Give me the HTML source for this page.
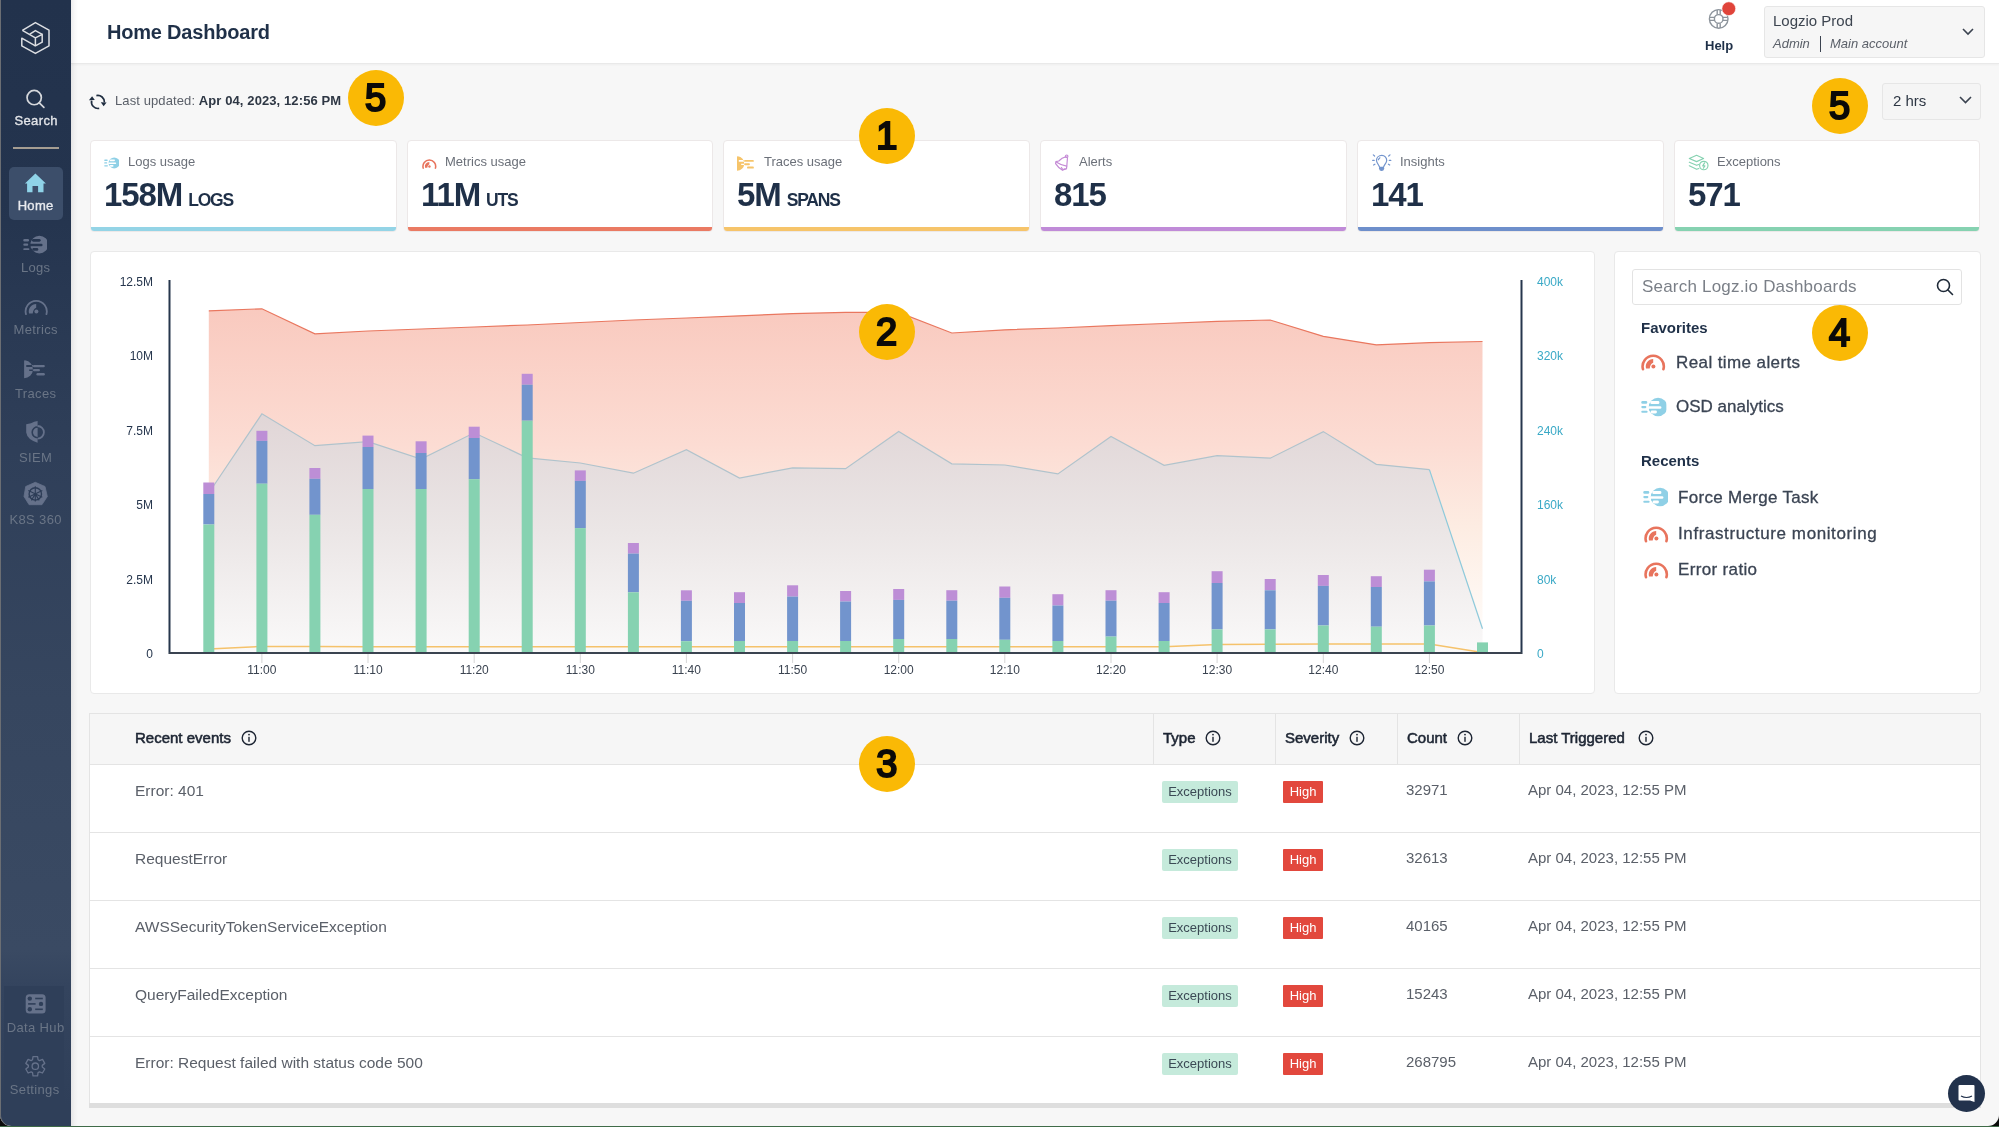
<!DOCTYPE html>
<html><head><meta charset="utf-8">
<style>
*{margin:0;padding:0;box-sizing:border-box}
html,body{width:1999px;height:1127px;overflow:hidden;background:#0b0b0b;font-family:"Liberation Sans",sans-serif}
#win{will-change:transform;position:absolute;left:0;top:0;width:1999px;height:1126px;background:#f7f7f7;border-radius:0 0 11px 11px;overflow:hidden}
#gl{position:absolute;left:0;top:1126px;width:1999px;height:1px;background:#3f6b48}
.abs{position:absolute}
.nw{white-space:nowrap}
#side{position:absolute;left:0;top:0;width:71px;height:1126px;background:linear-gradient(#22324c 0px,#24344e 200px,#2f3f59 450px,#36465f 700px,#3a4a63 950px,#34445e 986px,#2f3f59 1106px,#2f3f59 1126px);border-bottom-left-radius:11px;box-shadow:inset 1px 0 0 #6b6e73}
.si{position:absolute;left:0;width:71px;text-align:center;font-size:13px;color:#6a7586;white-space:nowrap;letter-spacing:0.35px;text-indent:0.35px}
#hdr{position:absolute;left:71px;top:0;width:1928px;height:64px;background:#fff;border-bottom:1px solid #e9e9e9;box-shadow:0 1px 2px rgba(0,0,0,0.04)}
.card{position:absolute;top:140px;height:92px;background:#fff;border:1px solid #ece8e8;border-radius:4px;overflow:hidden}
.card .bar{position:absolute;left:0;right:0;bottom:0;height:4px}
.card .t{position:absolute;left:37px;top:13px;font-size:13px;color:#6b7079;white-space:nowrap}
.card .n{position:absolute;left:13px;top:37px;font-size:33px;font-weight:bold;color:#1f3048;white-space:nowrap;letter-spacing:-1.1px;line-height:1}
.card .n span{font-size:17.5px;margin-left:6px;letter-spacing:-1.2px}
.card svg{position:absolute;left:13px;top:15px}
.yc{position:absolute;width:56px;height:56px;border-radius:50%;background:#fab905;color:#0c0a08;font-weight:normal;font-size:38px;-webkit-text-stroke:2.2px #0c0a08;text-align:center;line-height:57px}
.panel{position:absolute;background:#fff;border:1px solid #e9e9e9;border-radius:4px}
.fav{position:absolute;font-size:17px;color:#3b4453;-webkit-text-stroke:0.3px #3b4453;white-space:nowrap}
.fh{position:absolute;font-size:15px;font-weight:bold;color:#1f3048;white-space:nowrap}
.th{position:absolute;top:729px;font-size:15px;font-weight:normal;-webkit-text-stroke:0.55px #1d2533;color:#1d2533;white-space:nowrap}
.ev{position:absolute;left:135px;font-size:15.5px;color:#5b6069;white-space:nowrap}
.tc{position:absolute;font-size:15px;color:#5b6069;white-space:nowrap}
.bx{position:absolute;left:1162px;width:76px;height:22px;background:#c5eadb;color:#3b4a55;font-size:13px;text-align:center;line-height:22px;border-radius:2px}
.hi{position:absolute;left:1283px;width:40px;height:22px;background:#e2483d;color:#fff;font-size:13px;text-align:center;line-height:22px;border-radius:1px}
.rl{position:absolute;left:90px;width:1890px;height:1px;background:#e4e4e4}
</style></head><body>
<div id="win">
<svg width="0" height="0" style="position:absolute">
<defs>
  <mask id="lmask" maskUnits="userSpaceOnUse" x="0" y="0" width="27" height="21">
    <rect x="0" y="0" width="27" height="21" fill="#fff"/>
    <rect x="9.8" y="4.3" width="9.6" height="3" rx="1.4" fill="#000"/>
    <rect x="7.5" y="9.7" width="14" height="2.7" rx="1.3" fill="#000"/>
    <rect x="10.2" y="14.3" width="6.6" height="3" rx="1.4" fill="#000"/>
  </mask>
  <symbol id="ilogs" viewBox="0 0 27 21">
    <g mask="url(#lmask)">
      <circle cx="18" cy="10.5" r="9.8"/>
      <rect x="8.4" y="7.3" width="10" height="2.4" rx="1"/>
      <rect x="8.4" y="12.4" width="10" height="1.9" rx="0.9"/>
    </g>
    <rect x="0.3" y="4.3" width="6.3" height="2.8" rx="1.3"/>
    <rect x="0.3" y="9.4" width="5.4" height="2.3" rx="1.1"/>
    <rect x="0.3" y="14.5" width="6.7" height="2.1" rx="1"/>
  </symbol>
  <symbol id="igauge" viewBox="0 0 25 17">
    <path d="M1.98 15.2 A10.6 10.6 0 1 1 22.42 15.2" fill="none" stroke="currentColor" stroke-linecap="round"/>
    <path d="M5.05 14.5 A7.4 7.4 0 0 1 12.2 5.0 L12.2 8.7 Q9.2 9.8 8.7 14.6 Z"/>
    <circle cx="12.4" cy="12.6" r="2"/>
  </symbol>
  <symbol id="itraces" viewBox="0 0 19 16">
    <path d="M0 0.6 Q0 0 0.8 0.05 A7.75 7.75 0 0 1 0 15.5 Z M1.9 4 L7.8 4 L7.8 5.9 L1.9 5.9 Z M4.4 7.9 L7.8 7.9 L7.8 9.2 L4.4 9.2 Z" fill-rule="evenodd"/>
    <rect x="7.6" y="4" width="10.2" height="2" rx="1"/>
    <rect x="7.6" y="7.6" width="6" height="1.9" rx="0.9"/>
    <rect x="10.6" y="11" width="7.2" height="2.1" rx="1"/>
  </symbol>
</defs>
</svg>
<div id="side">
  <!-- logo -->
  <svg class="abs" style="left:15px;top:15px" width="42" height="45" viewBox="0 0 42 45" fill="none" stroke="#dcdee2" stroke-width="1.5" stroke-linejoin="round">
    <path d="M7.4 15.4 L20.4 7.6 L34 15.2 L34 30.8 L20.4 38.4 L6.8 30.8 L6.8 23.2 L20.4 30.8"/>
    <path d="M7.4 15.4 L20.4 22.8 L27.2 19.4 L27.2 27.2 L20.4 30.8 L20.4 22.8"/>
    <path d="M14.8 19.2 L20.4 15.6 L27.2 19.4"/>
  </svg>
  <!-- search -->
  <svg class="abs" style="left:25px;top:89px" width="22" height="22" viewBox="0 0 22 22" fill="none" stroke="#d6d8dc" stroke-width="1.7">
    <circle cx="9.2" cy="8.6" r="7.15"/><path d="M14.3 13.8 L18.9 18.3" stroke-linecap="round"/>
  </svg>
  <div class="si" style="top:113px;color:#e2e4e8;font-weight:normal;-webkit-text-stroke:0.35px #e2e4e8;font-size:13px;left:0.5px">Search</div>
  <div class="abs" style="left:13px;top:147px;width:46px;height:2px;background:#a59d92"></div>
  <!-- home -->
  <div class="abs" style="left:9px;top:167px;width:54px;height:53px;background:#3c4e6a;border-radius:5px"></div>
  <svg class="abs" style="left:24px;top:172px" width="23" height="21" viewBox="0 0 23 21">
    <path d="M11.4 1.4 L21.9 11.6 L19.5 11.6 L19.5 20.3 L14.1 20.3 L14.1 14 L8.5 14 L8.5 20.3 L3.1 20.3 L3.1 11.6 L0.9 11.6 Z" fill="#8fd3e8"/>
  </svg>
  <div class="si" style="top:198px;color:#e8eaee;font-weight:normal;-webkit-text-stroke:0.35px #e8eaee;left:0px">Home</div>
  <!-- logs -->
  <svg class="abs" style="left:22.5px;top:235px;color:#65718a;fill:#65718a" width="24.6" height="19.1" viewBox="0 0 27 21"><use href="#ilogs"/></svg>
  <div class="si" style="top:260px">Logs</div>
  <!-- metrics -->
  <svg class="abs" style="left:23.5px;top:299.3px;color:#65718a;fill:#65718a;stroke-width:1.8" width="25" height="17" viewBox="0 0 25 17"><use href="#igauge"/></svg>
  <div class="si" style="top:322px">Metrics</div>
  <!-- traces -->
  <svg class="abs" style="left:24.4px;top:359.6px;fill:#65718a" width="22.3" height="19.1" viewBox="0 0 18 15.5"><use href="#itraces"/></svg>
  <div class="si" style="top:386px">Traces</div>
  <!-- siem -->
  <svg class="abs" style="left:20px;top:416px" width="30" height="32" viewBox="0 0 30 32" fill="#65718a">
    <path fill-rule="evenodd" d="M17.6 5.1 L14.2 5.8 L11 7.2 L6.2 8.2 L6.2 16.5 Q7.2 23.5 17.6 26.7 Z M17.6 10.1 A6.2 6.2 0 0 0 17.6 22.5 Z"/>
    <path d="M17.6 11.7 A4.6 4.6 0 0 0 17.6 20.9 Z"/>
    <path d="M17.6 10 A6.3 6.3 0 0 1 17.6 22.6" fill="none" stroke="#65718a" stroke-width="1.8"/>
  </svg>
  <div class="si" style="top:450px">SIEM</div>
  <!-- k8s -->
  <svg class="abs" style="left:20px;top:478px" width="32" height="32" viewBox="0 0 32 32">
    <path d="M15.3 4.3 L25 8.5 L27.3 18.5 L21.9 26.7 L9.1 26.7 L4 18.5 L5.7 8.5 Z" fill="#65718a" stroke="#65718a" stroke-width="0.8" stroke-linejoin="round"/>
    <g stroke="#2d3d57" fill="none"><circle cx="15.3" cy="15.9" r="6.2" stroke-width="1.4"/>
    <path d="M15.3 8.2 L15.3 23.6 M8.3 12.6 L22.3 19.2 M22.3 12.6 L8.3 19.2 M11.4 22.4 L15.3 15.9 L19.2 22.4" stroke-width="1.1"/></g>
  </svg>
  <div class="si" style="top:512px;left:0px">K8S 360</div>
  <!-- bottom section -->
  <div class="abs" style="left:4px;top:986px;width:60px;height:119px;background:#2f3f59"></div>
  <svg class="abs" style="left:20px;top:988px" width="32" height="32" viewBox="0 0 32 32">
    <rect x="5.7" y="6.3" width="19.9" height="19.3" rx="3.5" fill="#65718a"/>
    <g fill="#2f3f59"><circle cx="9.8" cy="10.6" r="2.2"/><rect x="15.2" y="9.7" width="7.6" height="1.6"/>
    <circle cx="21" cy="15.9" r="2.2"/><rect x="8.1" y="15.1" width="7.5" height="1.6"/>
    <circle cx="9.8" cy="21.3" r="2.2"/><rect x="15.2" y="20.5" width="7.6" height="1.6"/></g>
  </svg>
  <div class="si" style="top:1020px;left:0">Data Hub</div>
  <svg class="abs" style="left:20px;top:1050px" width="32" height="32" viewBox="0 0 32 32" fill="none" stroke="#65718a" stroke-width="1.3" stroke-linejoin="round">
    <path d="M12.54 9.77 L13.00 6.57 L17.60 6.57 L18.06 9.77 L19.49 10.60 L22.49 9.39 L24.79 13.38 L22.25 15.37 L22.25 17.03 L24.79 19.02 L22.49 23.01 L19.49 21.80 L18.06 22.63 L17.60 25.83 L13.00 25.83 L12.54 22.63 L11.11 21.80 L8.11 23.01 L5.81 19.02 L8.35 17.03 L8.35 15.37 L5.81 13.38 L8.11 9.39 L11.11 10.60 Z"/><circle cx="15.3" cy="16.2" r="3.2"/>
  </svg>
  <div class="si" style="top:1082px;left:-1px">Settings</div>
</div>
<div id="hdr"></div>
<div class="abs" style="left:71px;top:0;width:7px;height:1126px;background:linear-gradient(to right,rgba(40,40,50,0.09),rgba(40,40,50,0.03) 50%,rgba(0,0,0,0))"></div>
<div class="abs nw" style="left:107px;top:21px;font-size:20px;font-weight:bold;color:#1f3048;letter-spacing:-0.2px">Home Dashboard</div>
<!-- help -->
<svg class="abs" style="left:1702px;top:0px" width="40" height="34" viewBox="0 0 40 34" fill="none" stroke="#8d949c" stroke-width="1.4">
  <circle cx="16.7" cy="18.9" r="9.3"/><circle cx="16.7" cy="18.9" r="4.3"/>
  <path d="M15.2 9.8 L15.2 14.6 M18.2 9.8 L18.2 14.6 M15.2 23.2 L15.2 28 M18.2 23.2 L18.2 28 M7.6 17.4 L12.4 17.4 M7.6 20.4 L12.4 20.4 M21 17.4 L25.8 17.4 M21 20.4 L25.8 20.4"/>
  <circle cx="26.8" cy="8.7" r="6.9" fill="#e0443a" stroke="#fff" stroke-width="0.6"/>
</svg>
<div class="abs nw" style="left:1705px;top:38px;font-size:13px;font-weight:bold;color:#1f3048">Help</div>
<!-- account -->
<div class="abs" style="left:1764px;top:6px;width:221px;height:52px;background:#f6f6f6;border:1px solid #e6e6e6;border-radius:3px"></div>
<div class="abs nw" style="left:1773px;top:12px;font-size:15px;color:#3d4550">Logzio Prod</div>
<div class="abs nw" style="left:1773px;top:36px;font-size:13px;font-style:italic;color:#5b6069">Admin</div>
<div class="abs" style="left:1820px;top:36px;width:1px;height:16px;background:#3b4350"></div>
<div class="abs nw" style="left:1830px;top:36px;font-size:13px;font-style:italic;color:#5b6069">Main account</div>
<svg class="abs" style="left:1962px;top:28px" width="12" height="8" viewBox="0 0 12 8" fill="none" stroke="#3b4350" stroke-width="1.6"><path d="M1 1 L6 6 L11 1"/></svg>
<!-- last updated -->
<svg class="abs" style="left:84px;top:86px" width="30" height="30" viewBox="0 0 30 30">
  <path d="M12.4 9.6 A6.6 6.6 0 0 1 20.4 16.4" fill="none" stroke="#1f2d40" stroke-width="1.7"/>
  <path d="M16.8 16.2 L22.6 16.4 L19.6 20.2 Z" fill="#1f2d40"/>
  <path d="M15.2 22.4 A6.6 6.6 0 0 1 7.6 14.6" fill="none" stroke="#1f2d40" stroke-width="1.7"/>
  <path d="M4.9 14.3 L10.8 14.1 L8.1 10.3 Z" fill="#1f2d40"/>
</svg>
<div class="abs nw" style="left:115px;top:93px;font-size:13px;color:#5b6069;letter-spacing:0.1px">Last updated: <b style="color:#2e3744">Apr 04, 2023, 12:56 PM</b></div>
<!-- time selector -->
<div class="abs" style="left:1882px;top:83px;width:99px;height:37px;background:#f5f5f5;border:1px solid #e6e6e6;border-radius:3px"></div>
<div class="abs nw" style="left:1893px;top:92px;font-size:15px;color:#2e3744">2 hrs</div>
<svg class="abs" style="left:1959px;top:96px" width="13" height="8" viewBox="0 0 13 8" fill="none" stroke="#3b4350" stroke-width="1.6"><path d="M1 1 L6.5 6.5 L12 1"/></svg>
<div class="card" style="left:90px;width:307px">
  <svg style="left:13.1px;top:16.4px;fill:#8fd0e6" width="15.3" height="11.9" viewBox="0 0 27 21"><use href="#ilogs"/></svg>
  <div class="t">Logs usage</div>
  <div class="n">158M<span>LOGS</span></div>
  <div class="bar" style="background:#94d4e6"></div>
</div>
<div class="card" style="left:407px;width:306px">
  <svg style="left:13.7px;top:17.8px;color:#e8745d;fill:#e8745d;stroke-width:2.6" width="15" height="10.2" viewBox="0 0 25 17"><use href="#igauge"/></svg>
  <div class="t">Metrics usage</div>
  <div class="n">11M<span>UTS</span></div>
  <div class="bar" style="background:#ea7a63"></div>
</div>
<div class="card" style="left:723px;width:307px">
  <svg style="left:13.2px;top:15.1px;fill:#f6c46a" width="18" height="15.5" viewBox="0 0 18 15.5"><use href="#itraces"/></svg>
  <div class="t" style="left:40px">Traces usage</div>
  <div class="n">5M<span>SPANS</span></div>
  <div class="bar" style="background:#f6c46a"></div>
</div>
<div class="card" style="left:1040px;width:307px">
  <svg style="left:9px;top:9px" width="24" height="24" viewBox="0 0 24 24" fill="none" stroke="#c58bd6" stroke-width="1.2" stroke-linejoin="round" stroke-linecap="round">
    <path d="M5.9 11.7 L8.8 11 Q12 7.6 15.6 6.9 L17.5 7.8 Q17.2 11.2 16.9 15 L16.5 18.8 Q14.2 19.1 12.5 20.3 Q8.2 17.6 5.6 13.6 Z"/>
    <path d="M6.6 12.3 Q11.2 15.4 16.7 16.2"/><path d="M11.4 17.6 Q12.8 20.6 15.1 18.7"/><circle cx="16.7" cy="6.2" r="1.2"/>
  </svg>
  <div class="t" style="left:38px">Alerts</div>
  <div class="n">815</div>
  <div class="bar" style="background:#c08bd8"></div>
</div>
<div class="card" style="left:1357px;width:307px">
  <svg style="left:9px;top:9px" width="28" height="24" viewBox="0 0 28 24" fill="none" stroke="#7294cd" stroke-width="1.2" stroke-linecap="round">
    <path d="M14.9 5.4 C11.6 5.4 9.5 7.8 9.5 10.4 C9.5 12.5 11.1 14 12.3 16.4 L12.6 17.3 L16.5 17.3 L16.8 16.4 C18 14 19.7 12.5 19.7 10.4 C19.7 7.8 17.6 5.4 14.9 5.4 Z"/>
    <path d="M12.6 18.6 L16.6 18.6 Q16.3 20.4 14.6 20.4 Q12.9 20.4 12.6 18.6 Z" fill="#7294cd"/>
    <path d="M6.3 4.9 L7.6 6 M5.7 10.4 L7.2 10.4 M6.6 15 L7.9 14.2 M23 4.9 L21.7 6 M22.3 10.4 L23.8 10.4 M22.7 15 L21.4 14.2 M12.9 7.8 Q11.9 8.4 11.4 9.8"/>
  </svg>
  <div class="t" style="left:42px">Insights</div>
  <div class="n">141</div>
  <div class="bar" style="background:#6e8fcb"></div>
</div>
<div class="card" style="left:1674px;width:306px">
  <svg style="left:9px;top:9px" width="28" height="24" viewBox="0 0 28 24" fill="none" stroke="#86d2b1" stroke-width="1.15" stroke-linejoin="round" stroke-linecap="round">
    <path d="M5.3 8.5 L12.6 5.3 L19.6 8.5 L12.6 11.6 Z"/><path d="M5.3 12.2 L12.6 15.3 L14.8 14.5"/><path d="M5.3 15.8 L12.6 19.3 L14.9 18.5"/>
    <circle cx="19.8" cy="15.5" r="4.2"/><path d="M20.6 12.9 L18.7 15.9 L20.9 15.9 L19.3 18.3"/>
  </svg>
  <div class="t" style="left:42px">Exceptions</div>
  <div class="n">571</div>
  <div class="bar" style="background:#86d2b1"></div>
</div>
<div class="panel" style="left:90px;top:251px;width:1505px;height:443px"></div>
<svg class="abs" style="left:89px;top:251px" width="1505" height="443" viewBox="89 251 1505 443">
<defs>
<linearGradient id="gs" x1="0" y1="305" x2="0" y2="653" gradientUnits="userSpaceOnUse">
<stop offset="0" stop-color="#f9c9be"/><stop offset="0.4" stop-color="#fcdcd3"/><stop offset="0.65" stop-color="#fdede3"/><stop offset="0.85" stop-color="#fef7f2"/><stop offset="1" stop-color="#ffffff"/></linearGradient>
<linearGradient id="gg" x1="0" y1="410" x2="0" y2="653" gradientUnits="userSpaceOnUse">
<stop offset="0" stop-color="#e0d5d6"/><stop offset="0.5" stop-color="#ebe6e6"/><stop offset="1" stop-color="#faf9f9"/></linearGradient>
</defs>
<polygon points="208.8,653 208.8,310.8 261.9,308.8 314.9,333.9 368.0,331.0 421.1,329.0 474.2,327.0 527.2,325.0 580.3,322.5 633.4,320.0 686.4,318.0 739.5,315.8 792.6,313.6 845.6,312.4 898.7,312.4 951.8,333.0 1004.8,329.8 1057.9,328.0 1111.0,325.7 1164.1,323.5 1217.1,321.3 1270.2,320.0 1323.3,336.3 1376.3,344.8 1429.4,342.7 1482.5,341.5 1482.48,653" fill="url(#gs)"/>
<polyline points="208.8,310.8 261.9,308.8 314.9,333.9 368.0,331.0 421.1,329.0 474.2,327.0 527.2,325.0 580.3,322.5 633.4,320.0 686.4,318.0 739.5,315.8 792.6,313.6 845.6,312.4 898.7,312.4 951.8,333.0 1004.8,329.8 1057.9,328.0 1111.0,325.7 1164.1,323.5 1217.1,321.3 1270.2,320.0 1323.3,336.3 1376.3,344.8 1429.4,342.7 1482.5,341.5" fill="none" stroke="#e9775f" stroke-width="1.2"/>
<polygon points="208.8,653 208.8,493.0 261.9,413.8 314.9,445.7 368.0,441.7 421.1,459.0 474.2,432.8 527.2,457.8 580.3,463.0 633.4,473.2 686.4,449.7 739.5,478.0 792.6,467.8 845.6,468.7 898.7,431.5 951.8,463.8 1004.8,465.0 1057.9,473.9 1111.0,436.4 1164.1,465.4 1217.1,455.7 1270.2,458.2 1323.3,431.6 1376.3,464.3 1429.4,469.6 1482.5,628.7 1482.48,653" fill="url(#gg)"/>
<polyline points="208.8,493.0 261.9,413.8 314.9,445.7 368.0,441.7 421.1,459.0 474.2,432.8 527.2,457.8 580.3,463.0 633.4,473.2 686.4,449.7 739.5,478.0 792.6,467.8 845.6,468.7 898.7,431.5 951.8,463.8 1004.8,465.0 1057.9,473.9 1111.0,436.4 1164.1,465.4 1217.1,455.7 1270.2,458.2 1323.3,431.6 1376.3,464.3 1429.4,469.6" fill="none" stroke="#b0c3cc" stroke-width="1.2"/>
<line x1="1429.4" y1="469.6" x2="1482.5" y2="628.7" stroke="#8ecadb" stroke-width="1.2"/>
<polyline points="208.8,648.9 261.9,646.5 314.9,646.5 368.0,646.7 421.1,646.7 474.2,646.7 527.2,646.7 580.3,646.7 633.4,646.7 686.4,646.7 739.5,646.7 792.6,646.7 845.6,646.7 898.7,646.7 951.8,646.7 1004.8,646.7 1057.9,646.7 1111.0,646.7 1164.1,646.7 1217.1,644.5 1270.2,644.2 1323.3,644.0 1376.3,644.0 1429.4,644.0 1482.5,652.5" fill="none" stroke="#f5c26b" stroke-width="1.5"/>
<rect x="203.3" y="482.5" width="11" height="11.5" fill="#bd8ed6"/>
<rect x="203.3" y="494" width="11" height="30.5" fill="#7294cd"/>
<rect x="203.3" y="524.5" width="11" height="128.5" fill="#86d2b1"/>
<rect x="256.4" y="430.8" width="11" height="10.1" fill="#bd8ed6"/>
<rect x="256.4" y="440.9" width="11" height="42.8" fill="#7294cd"/>
<rect x="256.4" y="483.7" width="11" height="169.3" fill="#86d2b1"/>
<rect x="309.4" y="468" width="11" height="10.8" fill="#bd8ed6"/>
<rect x="309.4" y="478.8" width="11" height="36.0" fill="#7294cd"/>
<rect x="309.4" y="514.8" width="11" height="138.2" fill="#86d2b1"/>
<rect x="362.5" y="435.6" width="11" height="11.4" fill="#bd8ed6"/>
<rect x="362.5" y="447" width="11" height="42.0" fill="#7294cd"/>
<rect x="362.5" y="489" width="11" height="164.0" fill="#86d2b1"/>
<rect x="415.6" y="441.3" width="11" height="11.7" fill="#bd8ed6"/>
<rect x="415.6" y="453" width="11" height="36.0" fill="#7294cd"/>
<rect x="415.6" y="489" width="11" height="164.0" fill="#86d2b1"/>
<rect x="468.7" y="426.7" width="11" height="11.3" fill="#bd8ed6"/>
<rect x="468.7" y="438" width="11" height="41.2" fill="#7294cd"/>
<rect x="468.7" y="479.2" width="11" height="173.8" fill="#86d2b1"/>
<rect x="521.7" y="373.8" width="11" height="10.9" fill="#bd8ed6"/>
<rect x="521.7" y="384.7" width="11" height="36.0" fill="#7294cd"/>
<rect x="521.7" y="420.7" width="11" height="232.3" fill="#86d2b1"/>
<rect x="574.8" y="470.4" width="11" height="10.5" fill="#bd8ed6"/>
<rect x="574.8" y="480.9" width="11" height="47.2" fill="#7294cd"/>
<rect x="574.8" y="528.1" width="11" height="124.9" fill="#86d2b1"/>
<rect x="627.9" y="543" width="11" height="10.6" fill="#bd8ed6"/>
<rect x="627.9" y="553.6" width="11" height="38.7" fill="#7294cd"/>
<rect x="627.9" y="592.3" width="11" height="60.7" fill="#86d2b1"/>
<rect x="680.9" y="590.3" width="11" height="10.5" fill="#bd8ed6"/>
<rect x="680.9" y="600.8" width="11" height="40.4" fill="#7294cd"/>
<rect x="680.9" y="641.2" width="11" height="11.8" fill="#86d2b1"/>
<rect x="734.0" y="592.2" width="11" height="10.8" fill="#bd8ed6"/>
<rect x="734.0" y="603" width="11" height="38.0" fill="#7294cd"/>
<rect x="734.0" y="641" width="11" height="12.0" fill="#86d2b1"/>
<rect x="787.1" y="585.3" width="11" height="11.3" fill="#bd8ed6"/>
<rect x="787.1" y="596.6" width="11" height="44.4" fill="#7294cd"/>
<rect x="787.1" y="641" width="11" height="12.0" fill="#86d2b1"/>
<rect x="840.1" y="591" width="11" height="10.5" fill="#bd8ed6"/>
<rect x="840.1" y="601.5" width="11" height="39.5" fill="#7294cd"/>
<rect x="840.1" y="641" width="11" height="12.0" fill="#86d2b1"/>
<rect x="893.2" y="589" width="11" height="10.9" fill="#bd8ed6"/>
<rect x="893.2" y="599.9" width="11" height="39.1" fill="#7294cd"/>
<rect x="893.2" y="639" width="11" height="14.0" fill="#86d2b1"/>
<rect x="946.3" y="590.2" width="11" height="10.5" fill="#bd8ed6"/>
<rect x="946.3" y="600.7" width="11" height="38.3" fill="#7294cd"/>
<rect x="946.3" y="639" width="11" height="14.0" fill="#86d2b1"/>
<rect x="999.3" y="586.5" width="11" height="11.3" fill="#bd8ed6"/>
<rect x="999.3" y="597.8" width="11" height="42.0" fill="#7294cd"/>
<rect x="999.3" y="639.8" width="11" height="13.2" fill="#86d2b1"/>
<rect x="1052.4" y="594.2" width="11" height="11.3" fill="#bd8ed6"/>
<rect x="1052.4" y="605.5" width="11" height="35.5" fill="#7294cd"/>
<rect x="1052.4" y="641" width="11" height="12.0" fill="#86d2b1"/>
<rect x="1105.5" y="590.2" width="11" height="10.5" fill="#bd8ed6"/>
<rect x="1105.5" y="600.7" width="11" height="35.9" fill="#7294cd"/>
<rect x="1105.5" y="636.6" width="11" height="16.4" fill="#86d2b1"/>
<rect x="1158.6" y="592.2" width="11" height="10.8" fill="#bd8ed6"/>
<rect x="1158.6" y="603" width="11" height="38.0" fill="#7294cd"/>
<rect x="1158.6" y="641" width="11" height="12.0" fill="#86d2b1"/>
<rect x="1211.6" y="571.2" width="11" height="11.8" fill="#bd8ed6"/>
<rect x="1211.6" y="583" width="11" height="46.4" fill="#7294cd"/>
<rect x="1211.6" y="629.4" width="11" height="23.6" fill="#86d2b1"/>
<rect x="1264.7" y="579" width="11" height="11.3" fill="#bd8ed6"/>
<rect x="1264.7" y="590.3" width="11" height="39.1" fill="#7294cd"/>
<rect x="1264.7" y="629.4" width="11" height="23.6" fill="#86d2b1"/>
<rect x="1317.8" y="575" width="11" height="10.9" fill="#bd8ed6"/>
<rect x="1317.8" y="585.9" width="11" height="39.6" fill="#7294cd"/>
<rect x="1317.8" y="625.5" width="11" height="27.5" fill="#86d2b1"/>
<rect x="1370.8" y="576.2" width="11" height="10.8" fill="#bd8ed6"/>
<rect x="1370.8" y="587" width="11" height="39.7" fill="#7294cd"/>
<rect x="1370.8" y="626.7" width="11" height="26.3" fill="#86d2b1"/>
<rect x="1423.9" y="569.7" width="11" height="11.7" fill="#bd8ed6"/>
<rect x="1423.9" y="581.4" width="11" height="44.1" fill="#7294cd"/>
<rect x="1423.9" y="625.5" width="11" height="27.5" fill="#86d2b1"/>
<rect x="1477.0" y="642.4" width="11" height="10.6" fill="#86d2b1"/>
<line x1="169.5" y1="280" x2="169.5" y2="654" stroke="#26364d" stroke-width="2"/>
<line x1="1521.5" y1="280" x2="1521.5" y2="654" stroke="#26364d" stroke-width="2"/>
<line x1="169" y1="653" x2="1522" y2="653" stroke="#3a4350" stroke-width="2"/>
<line x1="261.9" y1="654" x2="261.9" y2="663" stroke="#d5d5d5" stroke-width="1"/>
<line x1="368.0" y1="654" x2="368.0" y2="663" stroke="#d5d5d5" stroke-width="1"/>
<line x1="474.2" y1="654" x2="474.2" y2="663" stroke="#d5d5d5" stroke-width="1"/>
<line x1="580.3" y1="654" x2="580.3" y2="663" stroke="#d5d5d5" stroke-width="1"/>
<line x1="686.4" y1="654" x2="686.4" y2="663" stroke="#d5d5d5" stroke-width="1"/>
<line x1="792.6" y1="654" x2="792.6" y2="663" stroke="#d5d5d5" stroke-width="1"/>
<line x1="898.7" y1="654" x2="898.7" y2="663" stroke="#d5d5d5" stroke-width="1"/>
<line x1="1004.8" y1="654" x2="1004.8" y2="663" stroke="#d5d5d5" stroke-width="1"/>
<line x1="1111.0" y1="654" x2="1111.0" y2="663" stroke="#d5d5d5" stroke-width="1"/>
<line x1="1217.1" y1="654" x2="1217.1" y2="663" stroke="#d5d5d5" stroke-width="1"/>
<line x1="1323.3" y1="654" x2="1323.3" y2="663" stroke="#d5d5d5" stroke-width="1"/>
<line x1="1429.4" y1="654" x2="1429.4" y2="663" stroke="#d5d5d5" stroke-width="1"/>
<text x="261.9" y="674" text-anchor="middle" font-size="12" fill="#3a4350">11:00</text>
<text x="368.0" y="674" text-anchor="middle" font-size="12" fill="#3a4350">11:10</text>
<text x="474.2" y="674" text-anchor="middle" font-size="12" fill="#3a4350">11:20</text>
<text x="580.3" y="674" text-anchor="middle" font-size="12" fill="#3a4350">11:30</text>
<text x="686.4" y="674" text-anchor="middle" font-size="12" fill="#3a4350">11:40</text>
<text x="792.6" y="674" text-anchor="middle" font-size="12" fill="#3a4350">11:50</text>
<text x="898.7" y="674" text-anchor="middle" font-size="12" fill="#3a4350">12:00</text>
<text x="1004.8" y="674" text-anchor="middle" font-size="12" fill="#3a4350">12:10</text>
<text x="1111.0" y="674" text-anchor="middle" font-size="12" fill="#3a4350">12:20</text>
<text x="1217.1" y="674" text-anchor="middle" font-size="12" fill="#3a4350">12:30</text>
<text x="1323.3" y="674" text-anchor="middle" font-size="12" fill="#3a4350">12:40</text>
<text x="1429.4" y="674" text-anchor="middle" font-size="12" fill="#3a4350">12:50</text>
<text x="153" y="286.0" text-anchor="end" font-size="12" fill="#26364d">12.5M</text>
<text x="1537" y="286.0" font-size="12" fill="#3aa9c6">400k</text>
<text x="153" y="360.4" text-anchor="end" font-size="12" fill="#26364d">10M</text>
<text x="1537" y="360.4" font-size="12" fill="#3aa9c6">320k</text>
<text x="153" y="434.8" text-anchor="end" font-size="12" fill="#26364d">7.5M</text>
<text x="1537" y="434.8" font-size="12" fill="#3aa9c6">240k</text>
<text x="153" y="509.2" text-anchor="end" font-size="12" fill="#26364d">5M</text>
<text x="1537" y="509.2" font-size="12" fill="#3aa9c6">160k</text>
<text x="153" y="583.6" text-anchor="end" font-size="12" fill="#26364d">2.5M</text>
<text x="1537" y="583.6" font-size="12" fill="#3aa9c6">80k</text>
<text x="153" y="658.0" text-anchor="end" font-size="12" fill="#26364d">0</text>
<text x="1537" y="658.0" font-size="12" fill="#3aa9c6">0</text>
</svg>
<div class="panel" style="left:1614px;top:251px;width:367px;height:443px"></div>
<div class="abs" style="left:1632px;top:269px;width:330px;height:36px;background:#fff;border:1px solid #e3e3e3;border-radius:3px"></div>
<div class="abs nw" style="left:1642px;top:277px;font-size:17px;color:#7a7f87;letter-spacing:0.2px">Search Logz.io Dashboards</div>
<svg class="abs" style="left:1936px;top:278px" width="18" height="18" viewBox="0 0 18 18" fill="none" stroke="#1f2a38" stroke-width="1.6"><circle cx="7.5" cy="7.5" r="6"/><path d="M12 12 L16.5 16.5" stroke-linecap="round"/></svg>
<div class="fh" style="left:1641px;top:319px">Favorites</div>
<div class="fh" style="left:1641px;top:452px">Recents</div>
<!-- gauge icons -->
<svg class="abs" style="left:1641.4px;top:354px;color:#e8745d;fill:#e8745d;stroke-width:2.6" width="25" height="17" viewBox="0 0 25 17"><use href="#igauge"/></svg>
<div class="fav" style="left:1676px;top:353px;letter-spacing:0.4px">Real time alerts</div>
<svg class="abs" style="left:1641px;top:397px;fill:#8fd0e6" width="25.6" height="20" viewBox="0 0 27 21"><use href="#ilogs"/></svg>
<div class="fav" style="left:1676px;top:397px">OSD analytics</div>
<svg class="abs" style="left:1642.6px;top:487.3px;fill:#8fd0e6" width="25.6" height="20" viewBox="0 0 27 21"><use href="#ilogs"/></svg>
<div class="fav" style="left:1678px;top:488px;letter-spacing:0.3px">Force Merge Task</div>
<svg class="abs" style="left:1643.5px;top:525.8px;color:#e8745d;fill:#e8745d;stroke-width:2.6" width="25" height="17" viewBox="0 0 25 17"><use href="#igauge"/></svg>
<div class="fav" style="left:1678px;top:524px;letter-spacing:0.6px">Infrastructure monitoring</div>
<svg class="abs" style="left:1643.5px;top:561.5px;color:#e8745d;fill:#e8745d;stroke-width:2.6" width="25" height="17" viewBox="0 0 25 17"><use href="#igauge"/></svg>
<div class="fav" style="left:1678px;top:560px;letter-spacing:0.35px">Error ratio</div>
<div class="abs" style="left:89px;top:713px;width:1892px;height:393px;background:#fff;border:1px solid #e4e4e4;border-bottom:none"></div>
<div class="abs" style="left:90px;top:714px;width:1890px;height:50px;background:#f6f6f6"></div>
<div class="rl" style="top:764px"></div>
<div class="rl" style="top:832px"></div>
<div class="rl" style="top:900px"></div>
<div class="rl" style="top:968px"></div>
<div class="rl" style="top:1036px"></div>
<div class="abs" style="left:1153px;top:714px;width:1px;height:50px;background:#e4e4e4"></div>
<div class="abs" style="left:1275px;top:714px;width:1px;height:50px;background:#e4e4e4"></div>
<div class="abs" style="left:1397px;top:714px;width:1px;height:50px;background:#e4e4e4"></div>
<div class="abs" style="left:1519px;top:714px;width:1px;height:50px;background:#e4e4e4"></div>
<div class="abs" style="left:89px;top:1103px;width:1892px;height:5px;background:#dedede"></div>
<div class="th" style="left:135px">Recent events</div>
<div class="th" style="left:1163px">Type</div>
<div class="th" style="left:1285px">Severity</div>
<div class="th" style="left:1407px">Count</div>
<div class="th" style="left:1529px">Last Triggered</div>
<svg class="abs" style="left:241px;top:730px" width="16" height="16" viewBox="0 0 16 16"><circle cx="8" cy="8" r="6.8" fill="none" stroke="#1d2533" stroke-width="1.4"/><rect x="7.3" y="6.8" width="1.4" height="5" fill="#1d2533"/><circle cx="8" cy="4.6" r="0.9" fill="#1d2533"/></svg>
<svg class="abs" style="left:1205px;top:730px" width="16" height="16" viewBox="0 0 16 16"><circle cx="8" cy="8" r="6.8" fill="none" stroke="#1d2533" stroke-width="1.4"/><rect x="7.3" y="6.8" width="1.4" height="5" fill="#1d2533"/><circle cx="8" cy="4.6" r="0.9" fill="#1d2533"/></svg>
<svg class="abs" style="left:1349px;top:730px" width="16" height="16" viewBox="0 0 16 16"><circle cx="8" cy="8" r="6.8" fill="none" stroke="#1d2533" stroke-width="1.4"/><rect x="7.3" y="6.8" width="1.4" height="5" fill="#1d2533"/><circle cx="8" cy="4.6" r="0.9" fill="#1d2533"/></svg>
<svg class="abs" style="left:1457px;top:730px" width="16" height="16" viewBox="0 0 16 16"><circle cx="8" cy="8" r="6.8" fill="none" stroke="#1d2533" stroke-width="1.4"/><rect x="7.3" y="6.8" width="1.4" height="5" fill="#1d2533"/><circle cx="8" cy="4.6" r="0.9" fill="#1d2533"/></svg>
<svg class="abs" style="left:1638px;top:730px" width="16" height="16" viewBox="0 0 16 16"><circle cx="8" cy="8" r="6.8" fill="none" stroke="#1d2533" stroke-width="1.4"/><rect x="7.3" y="6.8" width="1.4" height="5" fill="#1d2533"/><circle cx="8" cy="4.6" r="0.9" fill="#1d2533"/></svg>

<div class="ev" style="top:781.5px">Error: 401</div><div class="bx" style="top:781px">Exceptions</div><div class="hi" style="top:781px">High</div><div class="tc" style="left:1406px;top:781px">32971</div><div class="tc" style="left:1528px;top:781px">Apr 04, 2023, 12:55 PM</div>
<div class="ev" style="top:849.5px">RequestError</div><div class="bx" style="top:849px">Exceptions</div><div class="hi" style="top:849px">High</div><div class="tc" style="left:1406px;top:849px">32613</div><div class="tc" style="left:1528px;top:849px">Apr 04, 2023, 12:55 PM</div>
<div class="ev" style="top:917.5px">AWSSecurityTokenServiceException</div><div class="bx" style="top:917px">Exceptions</div><div class="hi" style="top:917px">High</div><div class="tc" style="left:1406px;top:917px">40165</div><div class="tc" style="left:1528px;top:917px">Apr 04, 2023, 12:55 PM</div>
<div class="ev" style="top:985.5px">QueryFailedException</div><div class="bx" style="top:985px">Exceptions</div><div class="hi" style="top:985px">High</div><div class="tc" style="left:1406px;top:985px">15243</div><div class="tc" style="left:1528px;top:985px">Apr 04, 2023, 12:55 PM</div>
<div class="ev" style="top:1053.5px">Error: Request failed with status code 500</div><div class="bx" style="top:1053px">Exceptions</div><div class="hi" style="top:1053px">High</div><div class="tc" style="left:1406px;top:1053px">268795</div><div class="tc" style="left:1528px;top:1053px">Apr 04, 2023, 12:55 PM</div>

<!-- chat -->
<div class="abs" style="left:1948px;top:1075px;width:37px;height:37px;border-radius:50%;background:#22324c"></div>
<svg class="abs" style="left:1958px;top:1084px" width="17" height="19" viewBox="0 0 17 19"><path d="M1.5 1 L15.5 1 Q16.5 1 16.5 2 L16.5 18 L12 16.5 L1.5 16.5 Q0.5 16.5 0.5 15.5 L0.5 2 Q0.5 1 1.5 1 Z" fill="#fff"/><path d="M3 12 Q8.5 15 14 12" fill="none" stroke="#22324c" stroke-width="1.2"/></svg>
<!-- annotation circles -->
<div class="yc" style="left:347.5px;top:69.5px">5</div>
<div class="yc" style="left:858.8px;top:107.5px">1</div>
<div class="yc" style="left:858.7px;top:303.5px">2</div>
<div class="yc" style="left:858.8px;top:735.5px">3</div>
<div class="yc" style="left:1811.5px;top:304.5px">4</div>
<div class="yc" style="left:1811.5px;top:77.8px">5</div>
</div>
<div id="gl"></div>
</body></html>
